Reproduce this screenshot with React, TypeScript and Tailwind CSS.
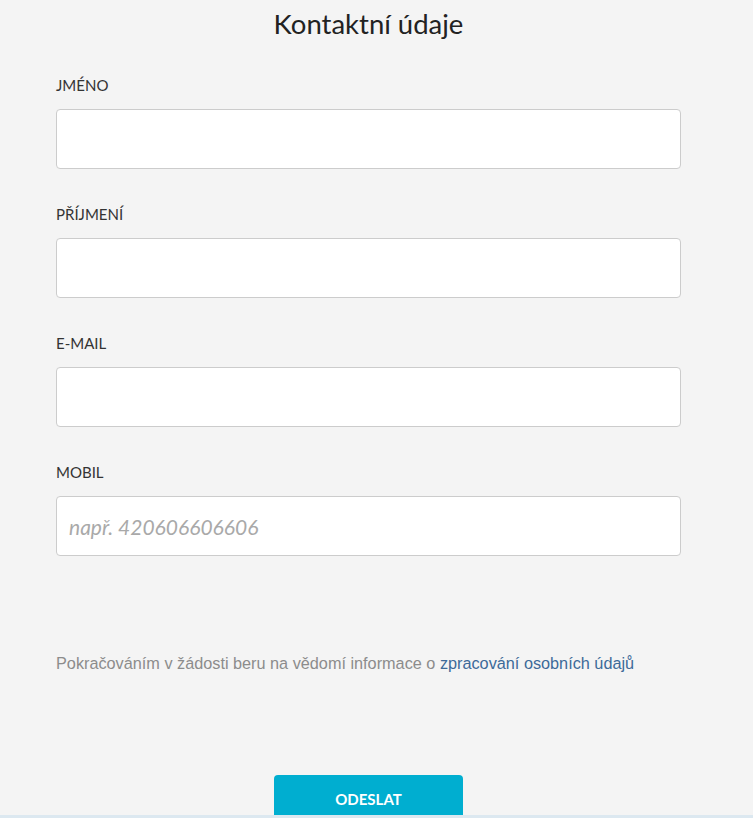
const fields = [
  { label: "JMÉNO", placeholder: "" },
  { label: "PŘÍJMENÍ", placeholder: "" },
  { label: "E-MAIL", placeholder: "" },
  { label: "MOBIL", placeholder: "např. 420606606606" },
];

export default function App() {
  return (
    <div className="flex h-[818px] flex-col overflow-hidden bg-[#f4f4f4]">
      <div className="flex-1 overflow-hidden pl-[56px] font-['Lato',sans-serif]">
        <div className="w-[625px]">
          <h1 className="pt-[8px] text-center text-[27.5px] leading-[32px] text-[#222]">
            Kontaktní údaje
          </h1>

          <form className="mt-[35px] flex flex-col gap-[35px]">
            {fields.map((field) => (
              <div key={field.label} className="flex flex-col">
                <label className="mb-[14px] text-[15px] leading-[20px] text-[#333]">
                  {field.label}
                </label>
                <input
                  type="text"
                  placeholder={field.placeholder}
                  className="h-[60px] rounded-[4px] border border-[#cccccc] bg-white px-[12px] text-[21px] italic text-[#333] outline-none placeholder:text-[#a9a9a9]"
                />
              </div>
            ))}
          </form>

          <p className="mt-[97px] whitespace-nowrap font-['Liberation_Sans',Arial,sans-serif] text-[16.25px] leading-[20px] text-[#8c8c8c]">
            Pokračováním v žádosti beru na vědomí informace o{" "}
            <a href="#" className="text-[#3d6a99]">
              zpracování osobních údajů
            </a>
          </p>

          <div className="mt-[102px] flex justify-center">
            <button
              type="button"
              className="h-[48px] w-[189px] rounded-[4px] bg-[#00aed0] text-[15px] font-bold text-white"
            >
              ODESLAT
            </button>
          </div>
        </div>
      </div>
      <div className="h-[3px] bg-[#dce8f0]" />
    </div>
  );
}
